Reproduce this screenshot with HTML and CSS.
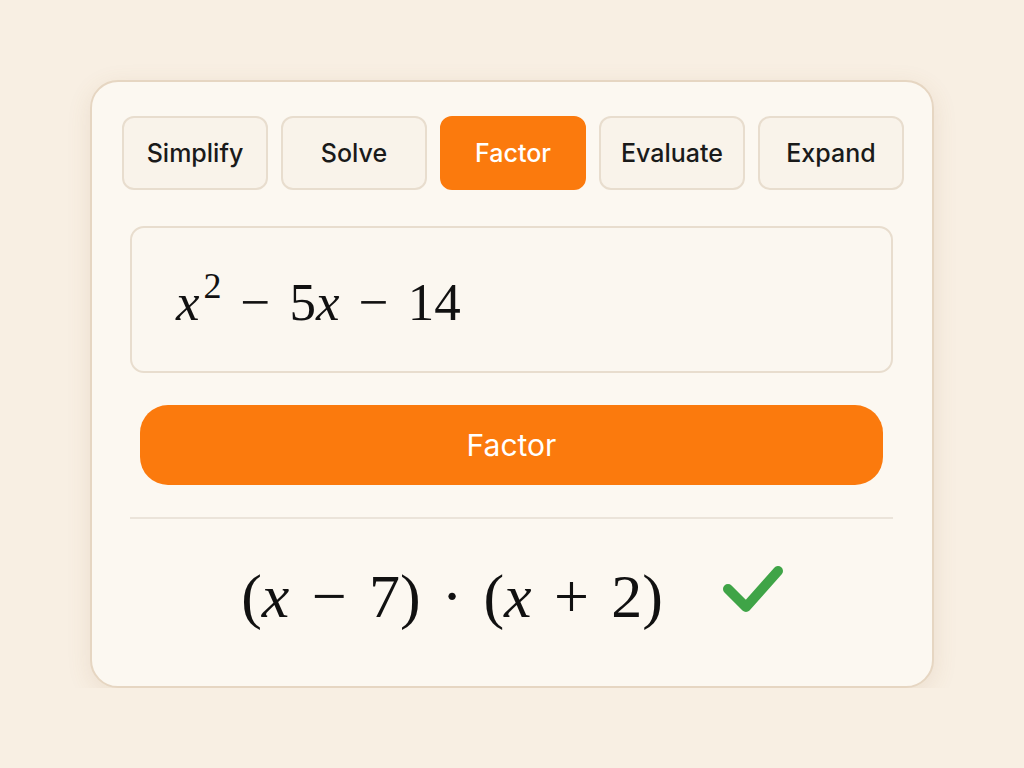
FILE: index.html
```html
<!DOCTYPE html>
<html lang="en">
<head>
    <meta charset="UTF-8" />
    <meta name="viewport" content="width=device-width, initial-scale=1.0" />
    <title>Algebra Calculator</title>
    <link rel="stylesheet" href="styles.css">
</head>
<body>
    <div class="card">
        <div class="tabs">
            <button class="tab">Simplify</button>
            <button class="tab">Solve</button>
            <button class="tab active">Factor</button>
            <button class="tab">Evaluate</button>
            <button class="tab">Expand</button>
        </div>

        <div class="input-box">
            <span class="math"><i>x</i><sup>2</sup><span class="op">&minus;</span>5<i>x</i><span class="op">&minus;</span>14</span>
        </div>

        <button class="go-btn">Factor</button>

        <div class="divider"></div>

        <div class="result">
            <span class="math">(<i>x</i><span class="op">&minus;</span>7)<span class="op dot">&middot;</span>(<i>x</i><span class="op">+</span>2)</span>
            <svg class="check" width="64" height="52" viewBox="0 0 64 52">
                <polyline points="7,26 25,44 57,8" fill="none" stroke="#3fa447" stroke-width="10" stroke-linecap="round" stroke-linejoin="round" />
            </svg>
        </div>
    </div>
</body>
</html>
```

FILE: styles.css
```css
body {
    margin: 0;
    padding: 80px 0 0;
    background: #f8efe3;
    font-family: "Inter", "Liberation Sans", sans-serif;
}

.card {
    width: 844px;
    height: 608px;
    margin: 0 auto;
    background: #fcf8f1;
    border: 2px solid #e6d6c2;
    border-radius: 28px;
    box-shadow: 0 6px 24px rgba(150, 110, 60, 0.12);
    padding: 34px 28px 0 30px;
    box-sizing: border-box;
}

.tabs {
    display: flex;
    gap: 13px;
}

.tab {
    width: 146px;
    height: 74px;
    border: 2px solid #e8ddce;
    border-radius: 12px;
    background: #f9f3ea;
    font-family: "Inter", "Liberation Sans", sans-serif;
    font-size: 25px;
    font-weight: 500;
    color: #1a1a1a;
    cursor: pointer;
}

.tab.active {
    background: #fb7a0d;
    border-color: #fb7a0d;
    color: #fff;
}

.input-box {
    margin: 36px 11px 0 8px;
    height: 147px;
    box-sizing: border-box;
    border: 2px solid #e8ddce;
    border-radius: 14px;
    background: #fbf7f0;
    display: flex;
    align-items: center;
    padding: 4px 0 0 44px;
}

.math {
    font-family: "Liberation Serif", "DejaVu Serif", serif;
    font-size: 53px;
    color: #111;
    white-space: nowrap;
}

.math i {
    font-style: italic;
}

.math sup {
    font-size: 36px;
    vertical-align: 22px;
    line-height: 0;
    margin-left: 4px;
}

.op {
    margin: 0 0.36em;
}

.go-btn {
    display: block;
    margin: 32px 21px 0 18px;
    width: 743px;
    height: 80px;
    border: none;
    border-radius: 28px;
    background: #fb7a0d;
    color: #fff;
    font-family: "Inter", "Liberation Sans", sans-serif;
    font-size: 30px;
    font-weight: 400;
    cursor: pointer;
}

.divider {
    margin: 32px 11px 0 8px;
    height: 2px;
    background: #ebe4da;
}

.result {
    display: flex;
    align-items: center;
    justify-content: center;
    gap: 58px;
    padding: 42px 0 0;
}

.result .math {
    font-size: 62px;
}

.result .op {
    margin: 0 0.36em;
}

.result .dot {
    margin: 0 0.34em;
}

.check {
    margin-bottom: 16px;
}
```
